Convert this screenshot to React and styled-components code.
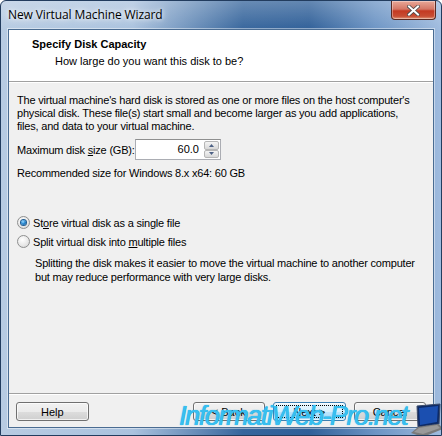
import React from "react";
import styled, { createGlobalStyle } from "styled-components";

const Global = createGlobalStyle`
  html, body { margin: 0; padding: 0; background: #ffffff; }
  #root { width: 442px; height: 436px; }
`;

const UI = `"Liberation Sans", Tahoma, Arial, sans-serif`;

const Win = styled.div`
  position: relative;
  box-sizing: border-box;
  width: 442px;
  height: 436px;
  display: flex;
  flex-direction: column;
  padding: 0 7px 7px 7px;
  border: 1px solid #223c5e;
  border-radius: 6px 6px 0 0;
  background:
    linear-gradient(180deg, rgba(255,255,255,0.25) 0%, rgba(255,255,255,0) 30px),
    linear-gradient(90deg, #b7cbe2 0%, #aac2de 30%, #36659c 55%, #2f5f98 70%, #6c94c4 85%, #9fbbde 100%);
  overflow: hidden;
  font-family: ${UI};
`;

const TitleBar = styled.div`
  height: 28px;
  display: flex;
  align-items: center;
  justify-content: space-between;
`;

const Title = styled.div`
  font-family: "Open Sans", "Noto Sans", sans-serif;
  font-size: 12px;
  color: #000;
  margin-top: -1px;
  text-shadow: 0 0 8px #fff, 0 0 4px #fff;
  letter-spacing: -0.1px;
`;

const CloseBtn = styled.div`
  align-self: flex-start;
  width: 45px;
  height: 19px;
  margin-right: -2px;
  box-sizing: border-box;
  border: 1px solid #5a2a22;
  border-top: none;
  border-radius: 0 0 4px 4px;
  background: linear-gradient(180deg, #e8a898 0%, #d47766 45%, #c43a22 55%, #c84e34 85%, #e29a7c 100%);
  display: flex;
  align-items: center;
  justify-content: center;
  box-shadow: inset 0 0 0 1px rgba(255,255,255,0.35);
`;

const Client = styled.div`
  flex: 1;
  display: flex;
  flex-direction: column;
  background: #f0f0f0;
  border: 1px solid #4a6c92;
  box-shadow: 0 0 0 1px rgba(255,255,255,0.45);
`;

const Header = styled.div`
  height: 52px;
  background: #ffffff;
  border-bottom: 1px solid #a0a0a0;
  box-sizing: border-box;
  padding: 8px 0 0 23px;
  display: flex;
  flex-direction: column;
  gap: 4px;
`;

const HeadTitle = styled.div`
  font-size: 11px;
  font-weight: bold;
  color: #000;
  line-height: 13px;
`;

const HeadSub = styled.div`
  font-size: 11px;
  color: #000;
  line-height: 13px;
  padding-left: 23px;
`;

const Body = styled.div`
  flex: 1;
  padding: 11px 8px 0 8px;
  display: flex;
  flex-direction: column;
  border-top: 1px solid #ffffff;
`;

const Para = styled.p`
  margin: 0;
  font-size: 11px;
  line-height: 13px;
  color: #000;
  white-space: nowrap;
  letter-spacing: -0.2px;
`;

const SizeRow = styled.div`
  display: flex;
  align-items: center;
  margin-top: 6px;
`;

const Label = styled.span`
  font-size: 11px;
  color: #000;
  width: 118px;
  white-space: nowrap;
  letter-spacing: -0.2px;
`;

const Spin = styled.div`
  display: flex;
  box-sizing: border-box;
  width: 86px;
  height: 21px;
  border: 1px solid #abadb3;
  border-top-color: #8e8f8f;
  background: #fff;
  padding: 1px;
`;

const SpinText = styled.div`
  flex: 1;
  font-size: 11px;
  text-align: right;
  padding-right: 5px;
  line-height: 17px;
`;

const SpinBtns = styled.div`
  width: 15px;
  display: flex;
  flex-direction: column;
`;

const SpinBtn = styled.div`
  flex: 1;
  box-sizing: border-box;
  border: 1px solid #b6b6b6;
  border-radius: 2px;
  background: linear-gradient(180deg, #f4f4f4 0%, #e6e6e6 50%, #d8d8d8 100%);
  display: flex;
  align-items: center;
  justify-content: center;
`;

const Recommend = styled(Para)`
  margin-top: 7px;
`;

const Options = styled.div`
  margin-top: 36px;
  display: flex;
  flex-direction: column;
  gap: 6px;
`;

const RadioRow = styled.div`
  display: flex;
  align-items: center;
  gap: 3px;
  padding-left: 0px;
  font-size: 11px;
  color: #000;
  height: 13px;
  white-space: nowrap;
  letter-spacing: -0.2px;
`;

const RadioDot = styled.span`
  box-sizing: border-box;
  width: 13px;
  height: 13px;
  border-radius: 50%;
  border: 1px solid #8e8f8f;
  background: radial-gradient(circle at 40% 35%, #ffffff 0%, #e8e8e8 55%, #cfcfcf 100%);
  display: flex;
  align-items: center;
  justify-content: center;
  &::after {
    content: "";
    width: 5px;
    height: 5px;
    border-radius: 50%;
    display: ${(p) => (p.$on ? "block" : "none")};
    background: radial-gradient(circle at 40% 35%, #9fdcff 0%, #2a8ad4 45%, #0b4f8a 100%);
    box-shadow: 0 0 0 1px #1f5d93;
  }
`;

const Note = styled(Para)`
  padding-left: 18px;
  margin-top: 8px;
  line-height: 14px;
`;

const Spacer = styled.div`
  flex: 1;
`;

const Footer = styled.div`
  border-top: 1px solid #a0a0a0;
  box-shadow: inset 0 1px 0 #ffffff;
  height: 34px;
  box-sizing: border-box;
  padding: 8px 7px 0 7px;
  display: flex;
  align-items: flex-start;
`;

const Btn = styled.div`
  box-sizing: border-box;
  width: 73px;
  height: 19px;
  border: 1px solid ${(p) => (p.$def ? "#3c7fb1" : "#707070")};
  border-radius: 3px;
  background: ${(p) =>
    p.$def
      ? "linear-gradient(180deg, #eaf6fd 0%, #d9f0fc 50%, #bee6fd 51%, #a7d9f5 100%)"
      : "linear-gradient(180deg, #f2f2f2 0%, #ebebeb 50%, #dddddd 51%, #cfcfcf 100%)"};
  box-shadow: inset 0 0 0 1px rgba(255,255,255,0.7);
  font-size: 11px;
  color: #000;
  display: flex;
  align-items: center;
  justify-content: center;
  margin-left: ${(p) => p.$ml || 0}px;
  position: relative;
  &::after {
    content: "";
    display: ${(p) => (p.$def ? "block" : "none")};
    position: absolute;
    inset: 2px;
    border: 1px dotted #000;
  }
`;

const Watermark = styled.div`
  position: absolute;
  left: 178px;
  top: 400px;
  font-family: "Liberation Sans", Arial, sans-serif;
  font-style: italic;
  font-size: 27px;
  letter-spacing: -1.4px;
  color: #38bff0;
  line-height: 30px;
  text-shadow: 0 0 1px #1aa7e0, 0.4px 0 0 #38bff0;
  pointer-events: none;
  white-space: nowrap;
`;

const Laptop = styled.svg`
  position: absolute;
  left: 408px;
  top: 402px;
`;

export default function App() {
  return (
    <>
      <Global />
      <Win>
        <TitleBar>
          <Title>New Virtual Machine Wizard</Title>
          <CloseBtn>
            <svg width="13" height="11" viewBox="0 0 13 11">
              <path d="M2 1.5 L11 9.5 M11 1.5 L2 9.5" stroke="#4a4a4a" strokeWidth="3.6" strokeLinecap="square" />
              <path d="M2 1.5 L11 9.5 M11 1.5 L2 9.5" stroke="#ffffff" strokeWidth="2" strokeLinecap="square" />
            </svg>
          </CloseBtn>
        </TitleBar>
        <Client>
          <Header>
            <HeadTitle>Specify Disk Capacity</HeadTitle>
            <HeadSub>How large do you want this disk to be?</HeadSub>
          </Header>
          <Body>
            <Para>
              The virtual machine's hard disk is stored as one or more files on the host computer's
              <br />
              physical disk. These file(s) start small and become larger as you add applications,
              <br />
              files, and data to your virtual machine.
            </Para>
            <SizeRow>
              <Label>
                Maximum disk <u>s</u>ize (GB):
              </Label>
              <Spin>
                <SpinText>60.0</SpinText>
                <SpinBtns>
                  <SpinBtn>
                    <svg width="5" height="3" viewBox="0 0 5 3"><path d="M0 3 L2.5 0 L5 3 Z" fill="#4d6185" /></svg>
                  </SpinBtn>
                  <SpinBtn>
                    <svg width="5" height="3" viewBox="0 0 5 3"><path d="M0 0 L2.5 3 L5 0 Z" fill="#4d6185" /></svg>
                  </SpinBtn>
                </SpinBtns>
              </Spin>
            </SizeRow>
            <Recommend>Recommended size for Windows 8.x x64: 60 GB</Recommend>
            <Options>
              <RadioRow>
                <RadioDot $on />
                <span>
                  St<u>o</u>re virtual disk as a single file
                </span>
              </RadioRow>
              <RadioRow>
                <RadioDot />
                <span>
                  Split virtual disk into <u>m</u>ultiple files
                </span>
              </RadioRow>
            </Options>
            <Note>
              Splitting the disk makes it easier to move the virtual machine to another computer
              <br />
              but may reduce performance with very large disks.
            </Note>
            <Spacer />
          </Body>
          <Footer>
            <Btn>Help</Btn>
            <Btn $ml={104}>&lt; Back</Btn>
            <Btn $ml={8} $def>Next &gt;</Btn>
            <Btn $ml={8}>Cancel</Btn>
          </Footer>
        </Client>
        <Watermark>InformatiWeb-Pro.net</Watermark>
        <Laptop width="34" height="34" viewBox="0 0 34 34">
          <polygon points="8,3 31,1 30,21 9,24" fill="#0d2a66" stroke="#3a4a6a" strokeWidth="1" />
          <polygon points="10,5 29,3 28,19 11,22" fill="#1b4fb0" />
          <polygon points="9,24 30,21 34,26 14,34 2,30" fill="#7a7a7a" />
          <polygon points="10,25 28,22 31,25 14,31 5,29" fill="#9a9a9a" />
        </Laptop>
      </Win>
    </>
  );
}
